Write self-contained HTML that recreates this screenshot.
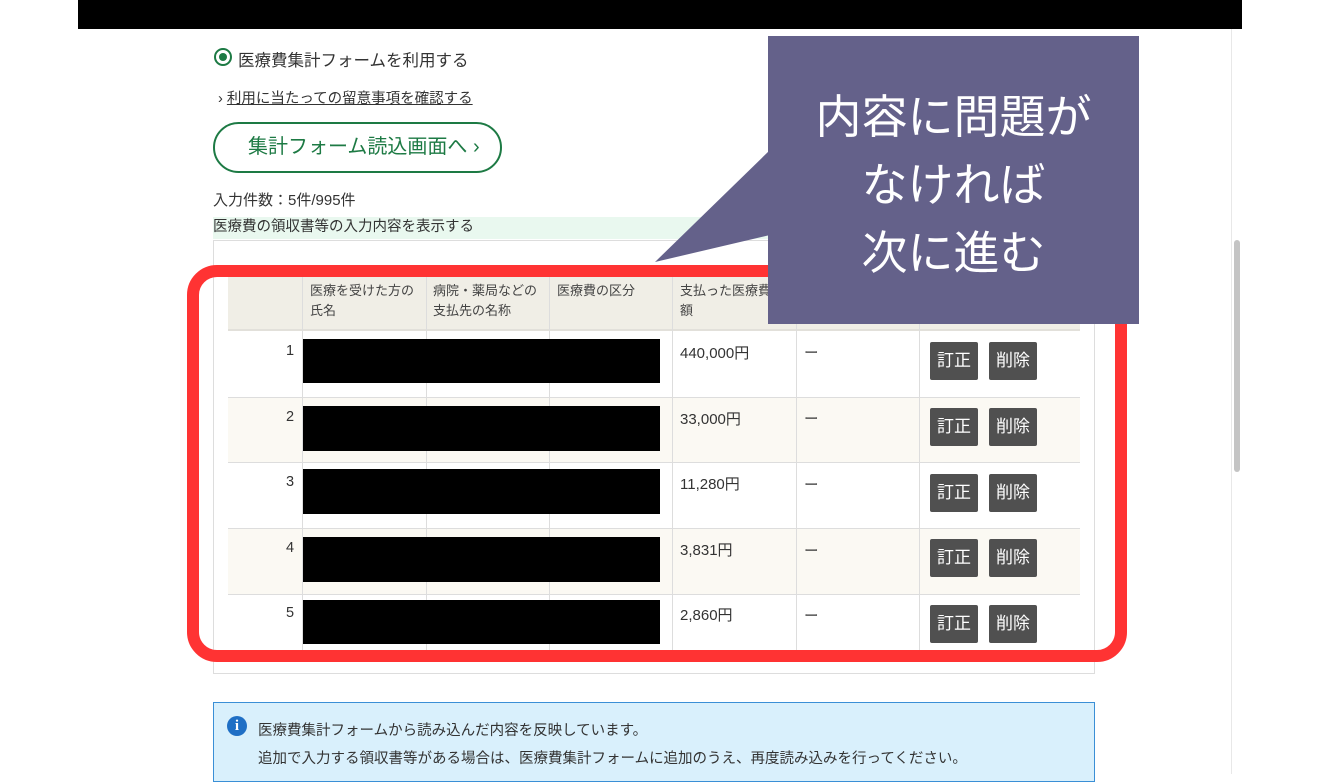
<!DOCTYPE html><html><head><meta charset="utf-8"><style>
body{margin:0;width:1320px;height:774px;position:relative;overflow:hidden;background:#fff;font-family:"Liberation Sans","Noto Sans CJK JP",sans-serif;color:#333}
.a{position:absolute}
.t{font-size:14.5px}
</style></head><body>
<div class="a" style="left:78px;top:0;width:1164px;height:29px;background:#000"></div>
<div class="a" style="left:1231px;top:29px;width:1px;height:745px;background:#e8e8e8"></div>
<div class="a" style="left:1234px;top:240px;width:6px;height:232px;background:#c4c4c4;border-radius:3px"></div>
<div class="a" style="left:214px;top:48px;width:18px;height:18px;border:2px solid #1d7a44;border-radius:50%;box-sizing:border-box"></div>
<div class="a" style="left:219px;top:53px;width:8px;height:8px;background:#1d7a44;border-radius:50%"></div>
<div class="a" style="left:238px;top:47px;font-size:16.5px;color:#333">医療費集計フォームを利用する</div>
<div class="a t" style="left:218px;top:87px">› <span style="text-decoration:underline">利用に当たっての留意事項を確認する</span></div>
<div class="a" style="left:213px;top:122px;width:289px;height:51px;border:2px solid #1d7a44;border-radius:26px;box-sizing:border-box;color:#1d7a44;font-size:20px;line-height:47px;padding-left:33px">集計フォーム読込画面へ ›</div>
<div class="a" style="left:213px;top:189px;font-size:15px">入力件数：5件/995件</div>
<div class="a t" style="left:213px;top:217px;width:560px;height:22px;background:#e9f8ef;line-height:20px">医療費の領収書等の入力内容を表示する</div>
<div class="a" style="left:213px;top:240px;width:882px;height:434px;border:1px solid #ddd;box-sizing:border-box"></div>
<div class="a" style="left:228px;top:273px;width:852px;height:58px;background:#f0eee6;border-bottom:2px solid #e2e0da;box-sizing:border-box"></div>
<div class="a" style="left:228px;top:397px;width:852px;height:65px;background:#fbf9f3"></div>
<div class="a" style="left:228px;top:528px;width:852px;height:66px;background:#fbf9f3"></div>
<div class="a" style="left:228px;top:397px;width:852px;height:1px;background:#ddd"></div>
<div class="a" style="left:228px;top:462px;width:852px;height:1px;background:#ddd"></div>
<div class="a" style="left:228px;top:528px;width:852px;height:1px;background:#ddd"></div>
<div class="a" style="left:228px;top:594px;width:852px;height:1px;background:#ddd"></div>
<div class="a" style="left:302px;top:273px;width:1px;height:377px;background:#ddd"></div>
<div class="a" style="left:426px;top:273px;width:1px;height:377px;background:#ddd"></div>
<div class="a" style="left:549px;top:273px;width:1px;height:377px;background:#ddd"></div>
<div class="a" style="left:672px;top:273px;width:1px;height:377px;background:#ddd"></div>
<div class="a" style="left:796px;top:273px;width:1px;height:377px;background:#ddd"></div>
<div class="a" style="left:919px;top:273px;width:1px;height:377px;background:#ddd"></div>
<div class="a" style="left:310px;top:281px;font-size:13px;line-height:20px;color:#444">医療を受けた方の<br>氏名</div>
<div class="a" style="left:433px;top:281px;font-size:13px;line-height:20px;color:#444">病院・薬局などの<br>支払先の名称</div>
<div class="a" style="left:557px;top:281px;font-size:13px;line-height:20px;color:#444">医療費の区分</div>
<div class="a" style="left:680px;top:281px;font-size:13px;line-height:20px;color:#444">支払った医療費<br>額</div>
<div class="a t" style="left:286px;top:343px">1</div><div class="a t" style="left:286px;top:409px">2</div><div class="a t" style="left:286px;top:474px">3</div><div class="a t" style="left:286px;top:540px">4</div><div class="a t" style="left:286px;top:605px">5</div>
<div class="a" style="left:303px;top:339px;width:357px;height:44px;background:#000"></div>
<div class="a" style="left:303px;top:406px;width:357px;height:45px;background:#000"></div>
<div class="a" style="left:303px;top:469px;width:357px;height:45px;background:#000"></div>
<div class="a" style="left:303px;top:537px;width:357px;height:45px;background:#000"></div>
<div class="a" style="left:303px;top:600px;width:357px;height:44px;background:#000"></div>
<div class="a" style="left:680px;top:342px;font-size:15px">440,000円</div><div class="a" style="left:680px;top:408px;font-size:15px">33,000円</div><div class="a" style="left:680px;top:473px;font-size:15px">11,280円</div><div class="a" style="left:680px;top:539px;font-size:15px">3,831円</div><div class="a" style="left:680px;top:604px;font-size:15px">2,860円</div>
<div class="a t" style="left:804px;top:342px">ー</div><div class="a t" style="left:804px;top:408px">ー</div><div class="a t" style="left:804px;top:474px">ー</div><div class="a t" style="left:804px;top:540px">ー</div><div class="a t" style="left:804px;top:605px">ー</div>
<style>.b{position:absolute;width:48px;height:38px;background:#505050;color:#fff;font-size:17px;line-height:38px;text-align:center;border-radius:2px}</style>
<div class="b" style="left:930px;top:342px">訂正</div><div class="b" style="left:989px;top:342px">削除</div>
<div class="b" style="left:930px;top:408px">訂正</div><div class="b" style="left:989px;top:408px">削除</div>
<div class="b" style="left:930px;top:474px">訂正</div><div class="b" style="left:989px;top:474px">削除</div>
<div class="b" style="left:930px;top:539px">訂正</div><div class="b" style="left:989px;top:539px">削除</div>
<div class="b" style="left:930px;top:605px">訂正</div><div class="b" style="left:989px;top:605px">削除</div>
<div class="a" style="left:187px;top:265px;width:940px;height:397px;border:12px solid #ff3333;border-radius:30px;box-sizing:border-box"></div>
<svg class="a" style="left:650px;top:140px" width="130" height="130"><polygon points="120,10 120,95 5,122" fill="#64618a"/></svg>
<div class="a" style="left:768px;top:36px;width:371px;height:288px;background:#64618a;color:#fff;font-size:46px;line-height:68px;text-align:center;padding-top:44px;box-sizing:border-box;font-family:'Noto Sans CJK JP',sans-serif">内容に問題が<br>なければ<br>次に進む</div>
<div class="a" style="left:213px;top:702px;width:882px;height:80px;background:#d9f0fc;border:1px solid #3a8fd6;box-sizing:border-box"></div>
<div class="a" style="left:227px;top:716px;width:20px;height:20px;border-radius:50%;background:#1f6fc5;color:#fff;font-weight:bold;font-size:15px;text-align:center;line-height:20px;font-family:'Liberation Serif',serif">i</div>
<div class="a t" style="left:258px;top:719px">医療費集計フォームから読み込んだ内容を反映しています。</div>
<div class="a t" style="left:258px;top:747px">追加で入力する領収書等がある場合は、医療費集計フォームに追加のうえ、再度読み込みを行ってください。</div>
</body></html>
